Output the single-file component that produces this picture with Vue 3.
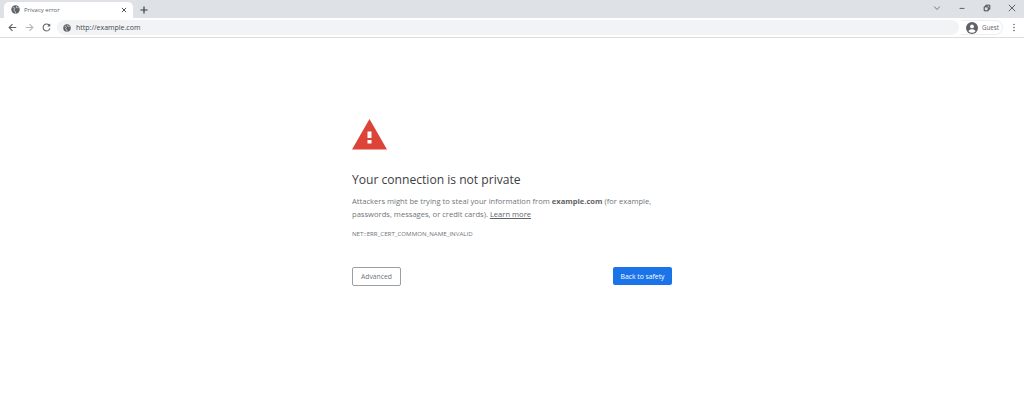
<script setup>
</script>

<template>
  <div class="page">
    <header class="tabstrip">
      <div class="tab">
        <svg class="globe" viewBox="0 0 16 16"><circle cx="8" cy="8" r="7.5" fill="#5f6368"/><path d="M3 4l3 1 1 2-2 1 1 3 2 1v3M10 2l-1 2 2 1 3-1" fill="none" stroke="#dee1e6" stroke-width="1.2"/></svg>
        <span class="tab-title">Privacy error</span>
        <svg class="tab-x" viewBox="0 0 10 10"><path d="M1.5 1.5l7 7M8.5 1.5l-7 7" stroke="#3c4043" stroke-width="1.5"/></svg>
      </div>
      <svg class="plus" viewBox="0 0 10 10"><path d="M5 .5v9M.5 5h9" stroke="#3c4043" stroke-width="1.5"/></svg>
      <div class="win">
        <svg class="w" viewBox="0 0 10 10"><path d="M1.5 3L5 7l3.5-4" fill="none" stroke="#5f6368" stroke-width="1"/></svg>
        <svg class="w" viewBox="0 0 10 10"><path d="M2 5.5h6" stroke="#3c4043" stroke-width="1"/></svg>
        <svg class="w" viewBox="0 0 10 10"><path d="M1.5 3.5h5v5h-5zM3.5 3.5V1.500h5v5h-2" fill="none" stroke="#3c4043" stroke-width="1.2"/></svg>
        <svg class="w" viewBox="0 0 10 10"><path d="M1 1l8 8M9 1l-8 8" stroke="#3c4043" stroke-width="1"/></svg>
      </div>
    </header>
    <nav class="toolbar">
      <svg class="nav" viewBox="0 0 12 12"><path d="M11 6H2M6 1.5L1.5 6 6 10.5" fill="none" stroke="#5f6368" stroke-width="1.5"/></svg>
      <svg class="nav" viewBox="0 0 12 12"><path d="M1 6h9M6 1.5L10.5 6 6 10.5" fill="none" stroke="#b4b7bb" stroke-width="1.5"/></svg>
      <svg class="nav" viewBox="0 0 12 12"><path d="M10 3.5A4.6 4.6 0 1 0 10.6 7" fill="none" stroke="#5f6368" stroke-width="1.4"/><path d="M11 .8v4H7z" fill="#5f6368"/></svg>
      <div class="omni">
        <svg class="globe small" viewBox="0 0 16 16"><circle cx="8" cy="8" r="7.5" fill="#5f6368"/><path d="M3 4l3 1 1 2-2 1 1 3 2 1v3M10 2l-1 2 2 1 3-1" fill="none" stroke="#f1f3f4" stroke-width="1.2"/></svg>
        <span>http://example.com</span>
      </div>
      <div class="guest">
        <svg class="avatar" viewBox="0 0 12 12"><circle cx="6" cy="6" r="6" fill="#5f6368"/><circle cx="6" cy="4.4" r="1.9" fill="#fff"/><path d="M2.4 9.2C3.2 7.7 4.6 7.3 6 7.3s2.8.4 3.6 1.9A4.8 4.8 0 0 1 6 10.8a4.8 4.8 0 0 1-3.6-1.6z" fill="#fff"/></svg>
        <span>Guest</span>
      </div>
      <svg class="menu" viewBox="0 0 4 12"><circle cx="2" cy="2" r="1.1" fill="#5f6368"/><circle cx="2" cy="6" r="1.1" fill="#5f6368"/><circle cx="2" cy="10" r="1.1" fill="#5f6368"/></svg>
    </nav>
    <main class="content">
      <div class="interstitial">
        <svg class="warn" viewBox="0 0 35 31"><path d="M17.5 0L35 30.5H0z" fill="#db4437"/><path d="M15.500 12.500h4v6.500h-4zM15.500 21h4v3.500h-4z" fill="#fff"/></svg>
        <h1>Your connection is not private</h1>
        <p class="body">Attackers might be trying to steal your information from <b>example.com</b> (for example, passwords, messages, or credit cards). <a>Learn more</a></p>
        <p class="code">NET::ERR_CERT_COMMON_NAME_INVALID</p>
        <div class="actions">
          <button class="adv">Advanced</button>
          <button class="back">Back to safety</button>
        </div>
      </div>
    </main>
  </div>
</template>

<style>
html, body { margin: 0; background: #fff; }
</style>

<style scoped>
.page { width: 1024px; height: 408px; display: flex; flex-direction: column; overflow: hidden; font-family: "Open Sans", sans-serif; background: #fff; }
.tabstrip { height: 18px; background: #dee1e6; display: flex; align-items: flex-end; padding-left: 4px; }
.tab { width: 129px; height: 16px; background: #fff; border-radius: 5px 5px 0 0; display: flex; align-items: center; padding: 0 4px 1px 7px; box-sizing: border-box; }
.globe { width: 9px; height: 9px; flex: none; }
.tab-title { font-size: 6px; color: #5f6368; margin-left: 4px; flex: 1; }
.tab-x { width: 6px; height: 6px; margin-right: 2px; }
.plus { width: 8px; height: 8px; margin: 0 0 4px 7px; }
.win { margin-left: auto; align-self: stretch; display: flex; align-items: center; gap: 17px; padding: 0 8px 3px 0; }
.w { width: 8px; height: 8px; }
.toolbar { height: 19px; background: #fff; border-bottom: 1px solid #dadce0; display: flex; align-items: center; padding: 0 9px 0 8px; }
.nav { width: 9px; height: 9px; margin-right: 8px; flex: none; }
.omni { width: 902px; height: 15px; margin-left: -2px; background: #f1f3f4; border-radius: 8px; display: flex; align-items: center; padding-left: 6px; box-sizing: border-box; font-size: 7px; color: #45494d; flex: none; }
.small { width: 8px; height: 8px; margin-right: 5px; }
.guest { display: flex; align-items: center; margin-left: 2px; width: 42px; height: 15px; padding-left: 5px; box-sizing: border-box; border: 1px solid #eceef0; border-left: 0; border-radius: 0 8px 8px 0; font-size: 6.2px; color: #5f6368; flex: none; }
.avatar { width: 12px; height: 12px; margin-right: 4px; }
.menu { width: 4px; height: 9px; margin-left: 9px; flex: none; }
.content { flex: 1; display: flex; justify-content: center; }
.interstitial { width: 320px; padding-top: 81px; }
.warn { width: 35px; height: 31px; display: block; }
h1 { margin: 21px 0 0; font-size: 12.1px; line-height: 17px; font-weight: 400; color: #3c4043; }
.body { margin: 7px 0 0; font-size: 7.6px; line-height: 13px; color: #70757a; }
.body b { font-weight: 700; color: #5f6368; }
.body a { text-decoration: underline; color: #5f6368; }
.code { margin: 9px 0 0; font-size: 6.15px; line-height: 8px; color: #70757a; }
.actions { display: flex; justify-content: space-between; align-items: flex-start; margin-top: 29px; }
button { font-family: inherit; font-size: 6.8px; border-radius: 2px; padding: 0; box-sizing: border-box; }
.adv { width: 49px; height: 19px; background: #fff; border: 1px solid #9aa0a6; color: #70757a; }
.back { width: 59px; height: 18px; background: #1a73e8; border: 0; color: #fff; }
</style>
